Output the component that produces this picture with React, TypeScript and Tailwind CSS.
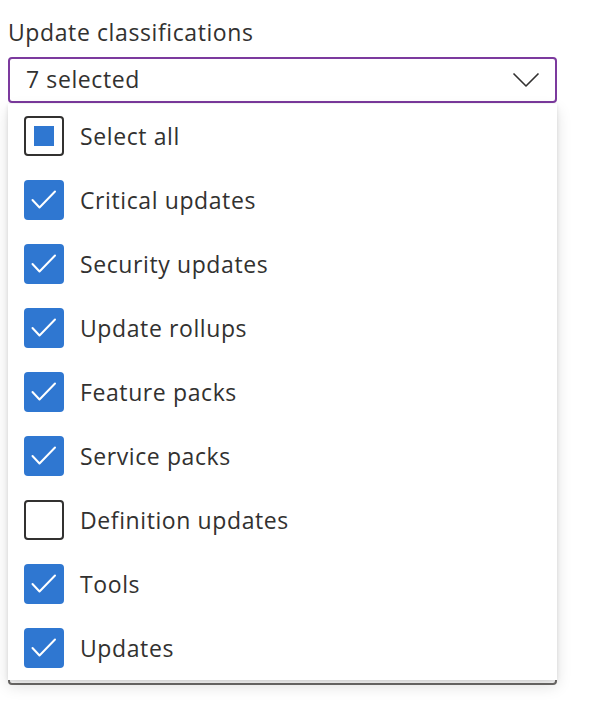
import React from 'react';

type Item = { label: string; checked: boolean };

const items: Item[] = [
  { label: 'Critical updates', checked: true },
  { label: 'Security updates', checked: true },
  { label: 'Update rollups', checked: true },
  { label: 'Feature packs', checked: true },
  { label: 'Service packs', checked: true },
  { label: 'Definition updates', checked: false },
  { label: 'Tools', checked: true },
  { label: 'Updates', checked: true },
];

function Checkbox({ state }: { state: 'checked' | 'unchecked' | 'mixed' }) {
  if (state === 'checked') {
    return (
      <span className="flex h-[40px] w-[40px] shrink-0 items-center justify-center rounded-[4px] bg-[#2f77d1]">
        <svg width="40" height="40" viewBox="0 0 40 40" fill="none">
          <polyline points="8.5,20 15.5,27.5 31,11.5" stroke="#fff" strokeWidth="2" strokeLinecap="round" strokeLinejoin="round" />
        </svg>
      </span>
    );
  }
  return (
    <span className="flex h-[40px] w-[40px] shrink-0 items-center justify-center rounded-[4px] border-[2.5px] border-[#323130] bg-white">
      {state === 'mixed' && <span className="h-[20px] w-[20px] bg-[#2f77d1]" />}
    </span>
  );
}

export default function App() {
  return (
    <div className="min-h-[718px] bg-white px-2 pt-[17px] text-[#323130] font-['Open_Sans',sans-serif] text-[23px] leading-[31px] tracking-[0.6px]">
      <div className="w-[549px]">
        <div className="mb-[9px]">Update classifications</div>

        {/* dropdown field */}
        <div className="flex h-[46px] items-start justify-between rounded-[4px] border-2 border-[#7c3a9e] pl-[16px] pr-[15px] pt-[5px]">
          <span>7 selected</span>
          <svg width="28" height="16" viewBox="0 0 28 16" fill="none" className="mt-[8px]">
            <polyline points="1.5,1.5 14,14 26.5,1.5" stroke="#323130" strokeWidth="1.6" strokeLinejoin="round" />
          </svg>
        </div>

        <div className="relative pt-[536px]">
          {/* field underneath the open menu */}
          <div className="h-[46px] rounded-[4px] border-2 border-[#6e6c6a]" />

          {/* open menu */}
          <div className="absolute left-0 right-0 top-[1px] bg-white shadow-[0_6px_14px_rgba(0,0,0,0.13),0_1px_4px_rgba(0,0,0,0.11)]">
            <div className="flex h-[64px] items-center gap-[16px] pl-[16px]">
              <Checkbox state="mixed" />
              <span>Select all</span>
            </div>
            {items.map((item) => (
              <div key={item.label} className="flex h-[64px] items-center gap-[16px] pl-[16px]">
                <Checkbox state={item.checked ? 'checked' : 'unchecked'} />
                <span>{item.label}</span>
              </div>
            ))}
          </div>
        </div>
      </div>
    </div>
  );
}
